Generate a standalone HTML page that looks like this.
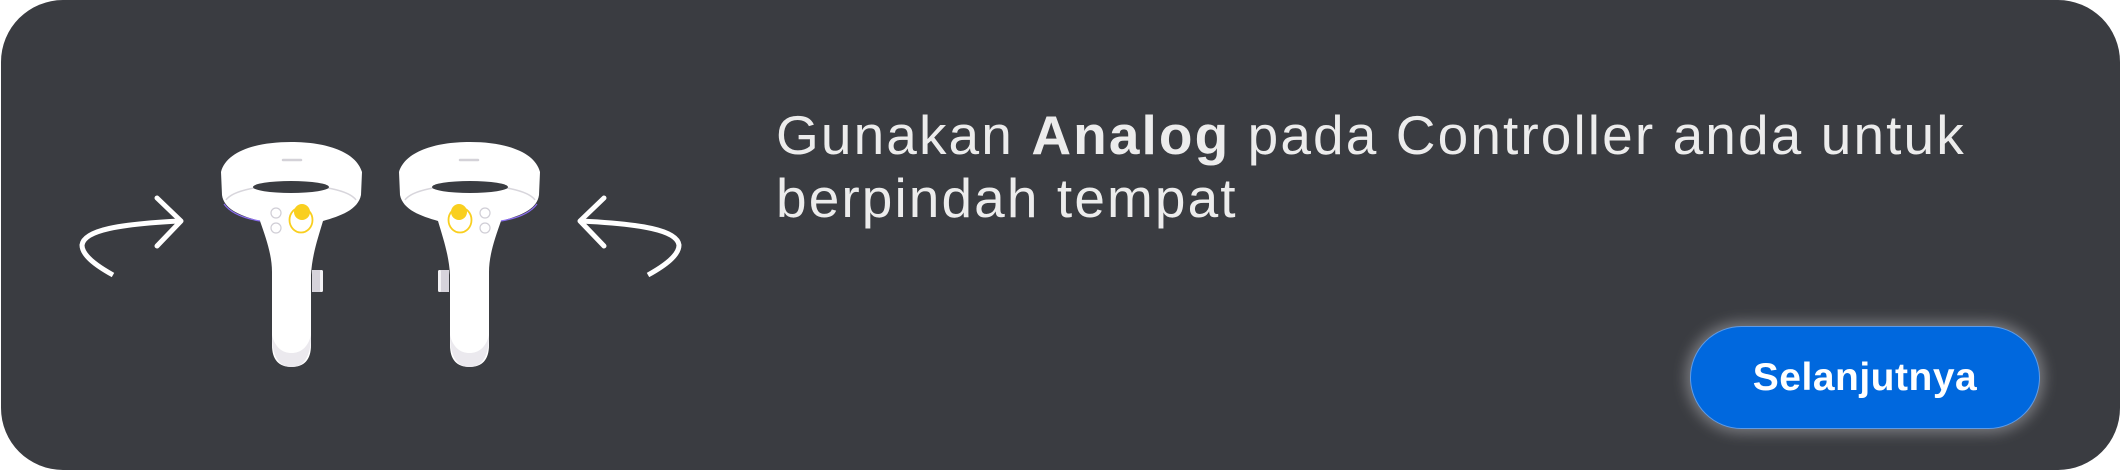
<!DOCTYPE html>
<html><head><meta charset="utf-8"><style>
html,body{margin:0;padding:0;background:#fff;}
body{width:2121px;height:470px;position:relative;overflow:hidden;}
.card{position:absolute;left:1px;top:0;width:2119px;height:470px;background:#3a3c41;border-radius:62px;}
.txt{position:absolute;left:776px;top:104px;font-family:"Liberation Sans",sans-serif;font-size:55px;line-height:63px;color:#ececec;letter-spacing:2.1px;white-space:nowrap;}
.txt b{font-weight:bold;}
.btn{position:absolute;left:1690px;top:326px;width:350px;height:103px;border-radius:52px;background:#0068de;box-shadow:0 0 14px 4px rgba(200,200,205,0.45);border:1px solid #5f9be6;box-sizing:border-box;color:#fff;font-family:"Liberation Sans",sans-serif;font-weight:bold;font-size:39px;line-height:101px;text-align:center;letter-spacing:0.5px;}
svg{position:absolute;left:0;top:0;}
</style></head><body>
<div class="card"></div>
<svg width="2121" height="470" viewBox="0 0 2121 470">
 <defs>
  <g id="ctrl">
   <path d="M113,275 C95,265 82,255 82,245 C84,230 120,224 180,221" fill="none" stroke="#fff" stroke-width="5"/>
   <path d="M157,198 L181,221 L157,246" fill="none" stroke="#fff" stroke-width="5" stroke-linecap="round" stroke-linejoin="round"/>
   <path d="M221,172 C226,152 255,142 291,142 C327,142 356,152 362,172 L361,195 C358,210 340,216 323,221 C318,238 312,255 311,275 L311,345 C311,360 304,367 291.5,367 C279,367 272,360 272,345 L272,272 C272,255 266,238 260,221 C242,216 224,210 222,195 Z" fill="#fff"/>
   <path d="M272,335 C272,358 280,367 291.5,367 C303,367 311,358 311,335 C308,348 300,353 291.5,353 C283,353 275,348 272,335 Z" fill="#ebe9ee"/>
   <path d="M224,204 C232,215 248,219 260,221" fill="none" stroke="#8a6cf0" stroke-width="1.2"/>
   <path d="M226,200 C240,180 342,180 356,200" fill="none" stroke="#d8d6dc" stroke-width="1.5"/>
   <ellipse cx="291" cy="187" rx="38" ry="6" fill="#3a3c41"/>
   <path d="M283,160 L301,160" stroke="#d4d2d8" stroke-width="2.5" stroke-linecap="round"/>
   <circle cx="276" cy="213" r="5" fill="#fff" stroke="#d0ced6" stroke-width="1.2"/>
   <circle cx="276" cy="228" r="5" fill="#fff" stroke="#d0ced6" stroke-width="1.2"/>
   <ellipse cx="301" cy="220" rx="11.5" ry="12.5" fill="none" stroke="#f9cf1f" stroke-width="1.8"/>
   <circle cx="302" cy="212" r="8" fill="#f9cf1f"/>
   <rect x="312" y="270" width="10" height="22" fill="#d6d3db"/>
   <rect x="320" y="270" width="3" height="22" rx="1.5" fill="#f3f2f5"/>
  </g>
 </defs>
 <use href="#ctrl"/>
 <use href="#ctrl" transform="translate(761,0) scale(-1,1)"/>
</svg>
<div class="txt">Gunakan <b>Analog</b> pada Controller anda untuk<br>berpindah tempat</div>
<div class="btn">Selanjutnya</div>
</body></html>
